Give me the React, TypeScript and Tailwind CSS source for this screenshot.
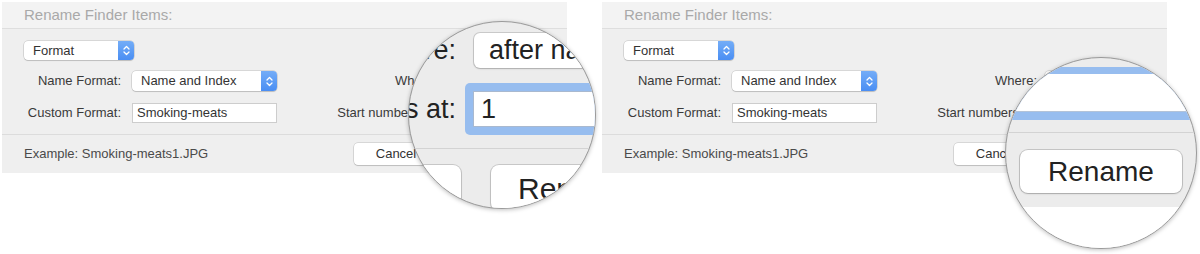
import React from 'react';

const Stepper: React.FC<{ w?: string }> = ({ w = 'w-[16px]' }) => (
    <div className={`flex h-full ${w} shrink-0 items-center justify-center rounded-r-[4px] bg-linear-to-b from-[#74adf7] to-[#4a8ef3]`}>
        <svg width="7" height="11" viewBox="0 0 7 11" fill="none" stroke="white" strokeWidth="1.3" strokeLinecap="round" strokeLinejoin="round">
            <path d="M1 4 L3.5 1.5 L6 4 M1 7 L3.5 9.5 L6 7" />
        </svg>
    </div>
);

const Popup: React.FC<{ label: string; className: string; padding?: string }> = ({ label, className, padding = 'pl-[9px]' }) => (
    <div className={`flex items-center rounded-[4px] bg-white shadow-[0_0_0_0.5px_rgba(0,0,0,0.2),0_1px_1px_rgba(0,0,0,0.12)] ${className}`}>
        <span className={`flex-1 whitespace-nowrap ${padding} text-[13px] text-[#333]`}>{label}</span>
        <Stepper />
    </div>
);

const LeftLens: React.FC = () => (
    <div className="absolute left-[408px] top-[21px] h-[188px] w-[188px] overflow-hidden rounded-full border-[1.5px] border-[#9a9a9a] bg-[#ececec] shadow-[0_1px_4px_rgba(0,0,0,0.25)]">
        <div className="-ml-[200px] w-[520px] pt-[11px] text-[27px] text-[#222]">
            {/* Where row, magnified */}
            <div className="flex h-[35px] items-center">
                <span className="w-[247px] whitespace-nowrap text-right">Where:</span>
                <div className="ml-[18px] flex h-[35px] w-[220px] items-center rounded-[6px] bg-white pl-[15px] shadow-[0_0_0_1px_rgba(0,0,0,0.14),0_1px_2px_rgba(0,0,0,0.15)]">
                    after name
                </div>
            </div>

            {/* Start numbers row, magnified */}
            <div className="mt-[15px] flex h-[52px] items-center">
                <span className="w-[247px] whitespace-nowrap text-right">Start numbers at:</span>
                <div className="ml-[9px] h-[52px] w-[220px] rounded-[5px] bg-[#97bdef] p-[8px]">
                    <div className="flex h-full items-center border border-[#a9b9cf] bg-white pl-[7px]">1</div>
                </div>
            </div>

            <div className="mt-[13px] h-px bg-[#d3d3d3]"></div>

            {/* Buttons, magnified */}
            <div className="mt-[16px] flex">
                <div className="ml-[52px] h-[46px] w-[200px] rounded-[8px] bg-white shadow-[0_0_0_1px_rgba(0,0,0,0.15),0_1px_2px_rgba(0,0,0,0.15)]"></div>
                <div className="ml-[30px] flex h-[46px] w-[200px] items-center rounded-[8px] bg-white pl-[27px] text-[30px] shadow-[0_0_0_1px_rgba(0,0,0,0.15),0_1px_2px_rgba(0,0,0,0.15)]">
                    Rename
                </div>
            </div>
        </div>
    </div>
);

const RightLens: React.FC = () => (
    <div className="absolute left-[405px] top-[57px] flex h-[192px] w-[192px] flex-col overflow-hidden rounded-full border-[1.5px] border-[#9a9a9a] bg-[#ececec] shadow-[0_1px_4px_rgba(0,0,0,0.25)]">
        {/* focused field, magnified */}
        <div className="mt-[9px] bg-[#97bdef] py-[7px] pb-[8px]">
            <div className="h-[38px] border-b border-[#b3c3d8] bg-white"></div>
        </div>
        <div className="mt-[12px] h-px bg-[#d3d3d3]"></div>
        <div className="mx-[14px] mt-[17px] flex h-[43px] items-center justify-center rounded-[8px] bg-white text-[28px] text-[#222] shadow-[0_0_0_1px_rgba(0,0,0,0.16),0_1px_2px_rgba(0,0,0,0.15)]">
            Rename
        </div>
        <div className="mt-[14px] flex-1 bg-white"></div>
    </div>
);

const Panel: React.FC<{ lens: 'left' | 'right' }> = ({ lens }) => (
    <div className="relative h-[254px] w-[600px] shrink-0 pl-[2px] pt-[2px]">
        <div className="w-[565px] bg-[#efefef] text-[13px] text-[#3a3a3a]">
            {/* Title */}
            <div className="flex h-[27px] items-center border-b border-[#dedede] bg-[#f3f3f3] pl-[22px] text-[15px] text-[#a9a9a9]">
                Rename Finder Items:
            </div>

            {/* Fields */}
            <div className="px-[22px] pb-[11px] pt-[12px]">
                <Popup label="Format" className="h-[19px] w-[110px]" />

                <div className="mt-[11px] flex h-[20px] items-center">
                    <span className="w-[97px] shrink-0 text-right">Name Format:</span>
                    <Popup label="Name and Index" className="ml-[11px] h-[20px] w-[145px] shrink-0" />
                    <span className="w-[160px] shrink-0 text-right">Where:</span>
                    <Popup label="after name" className="ml-[8px] h-[20px] w-[100px] shrink-0" />
                </div>

                <div className="mt-[12px] flex h-[20px] items-center">
                    <span className="w-[97px] shrink-0 text-right">Custom Format:</span>
                    <div className="ml-[11px] flex h-[20px] w-[145px] shrink-0 items-center border border-[#cdcdcd] bg-white pl-[4px] text-[#333]">
                        Smoking-meats
                    </div>
                    <span className="w-[160px] shrink-0 text-right">Start numbers at:</span>
                    <div className="ml-[8px] flex h-[20px] w-[100px] shrink-0 items-center border border-[#cdcdcd] bg-white pl-[4px]">1</div>
                </div>
            </div>

            {/* Footer */}
            <div className="flex h-[39px] items-center border-t border-[#dcdcdc] pl-[22px]">
                <span className="w-[330px] shrink-0 text-[#4a4a4a]">Example: Smoking-meats1.JPG</span>
                <div className="flex h-[22px] w-[84px] shrink-0 items-center justify-center rounded-[4px] bg-white text-[#333] shadow-[0_0_0_0.5px_rgba(0,0,0,0.2),0_1px_1px_rgba(0,0,0,0.12)]">
                    Cancel
                </div>
                <div className="ml-[12px] flex h-[22px] w-[84px] shrink-0 items-center justify-center rounded-[4px] bg-white text-[#333] shadow-[0_0_0_0.5px_rgba(0,0,0,0.2),0_1px_1px_rgba(0,0,0,0.12)]">
                    Rename
                </div>
            </div>
        </div>

        {lens === 'left' ? <LeftLens /> : <RightLens />}
    </div>
);

const App: React.FC = () => {
    return (
        <div className="flex h-[254px] w-[1200px] overflow-hidden bg-white font-['Liberation_Sans',Arial,sans-serif]">
            <Panel lens="left" />
            <Panel lens="right" />
        </div>
    );
};

export default App;
